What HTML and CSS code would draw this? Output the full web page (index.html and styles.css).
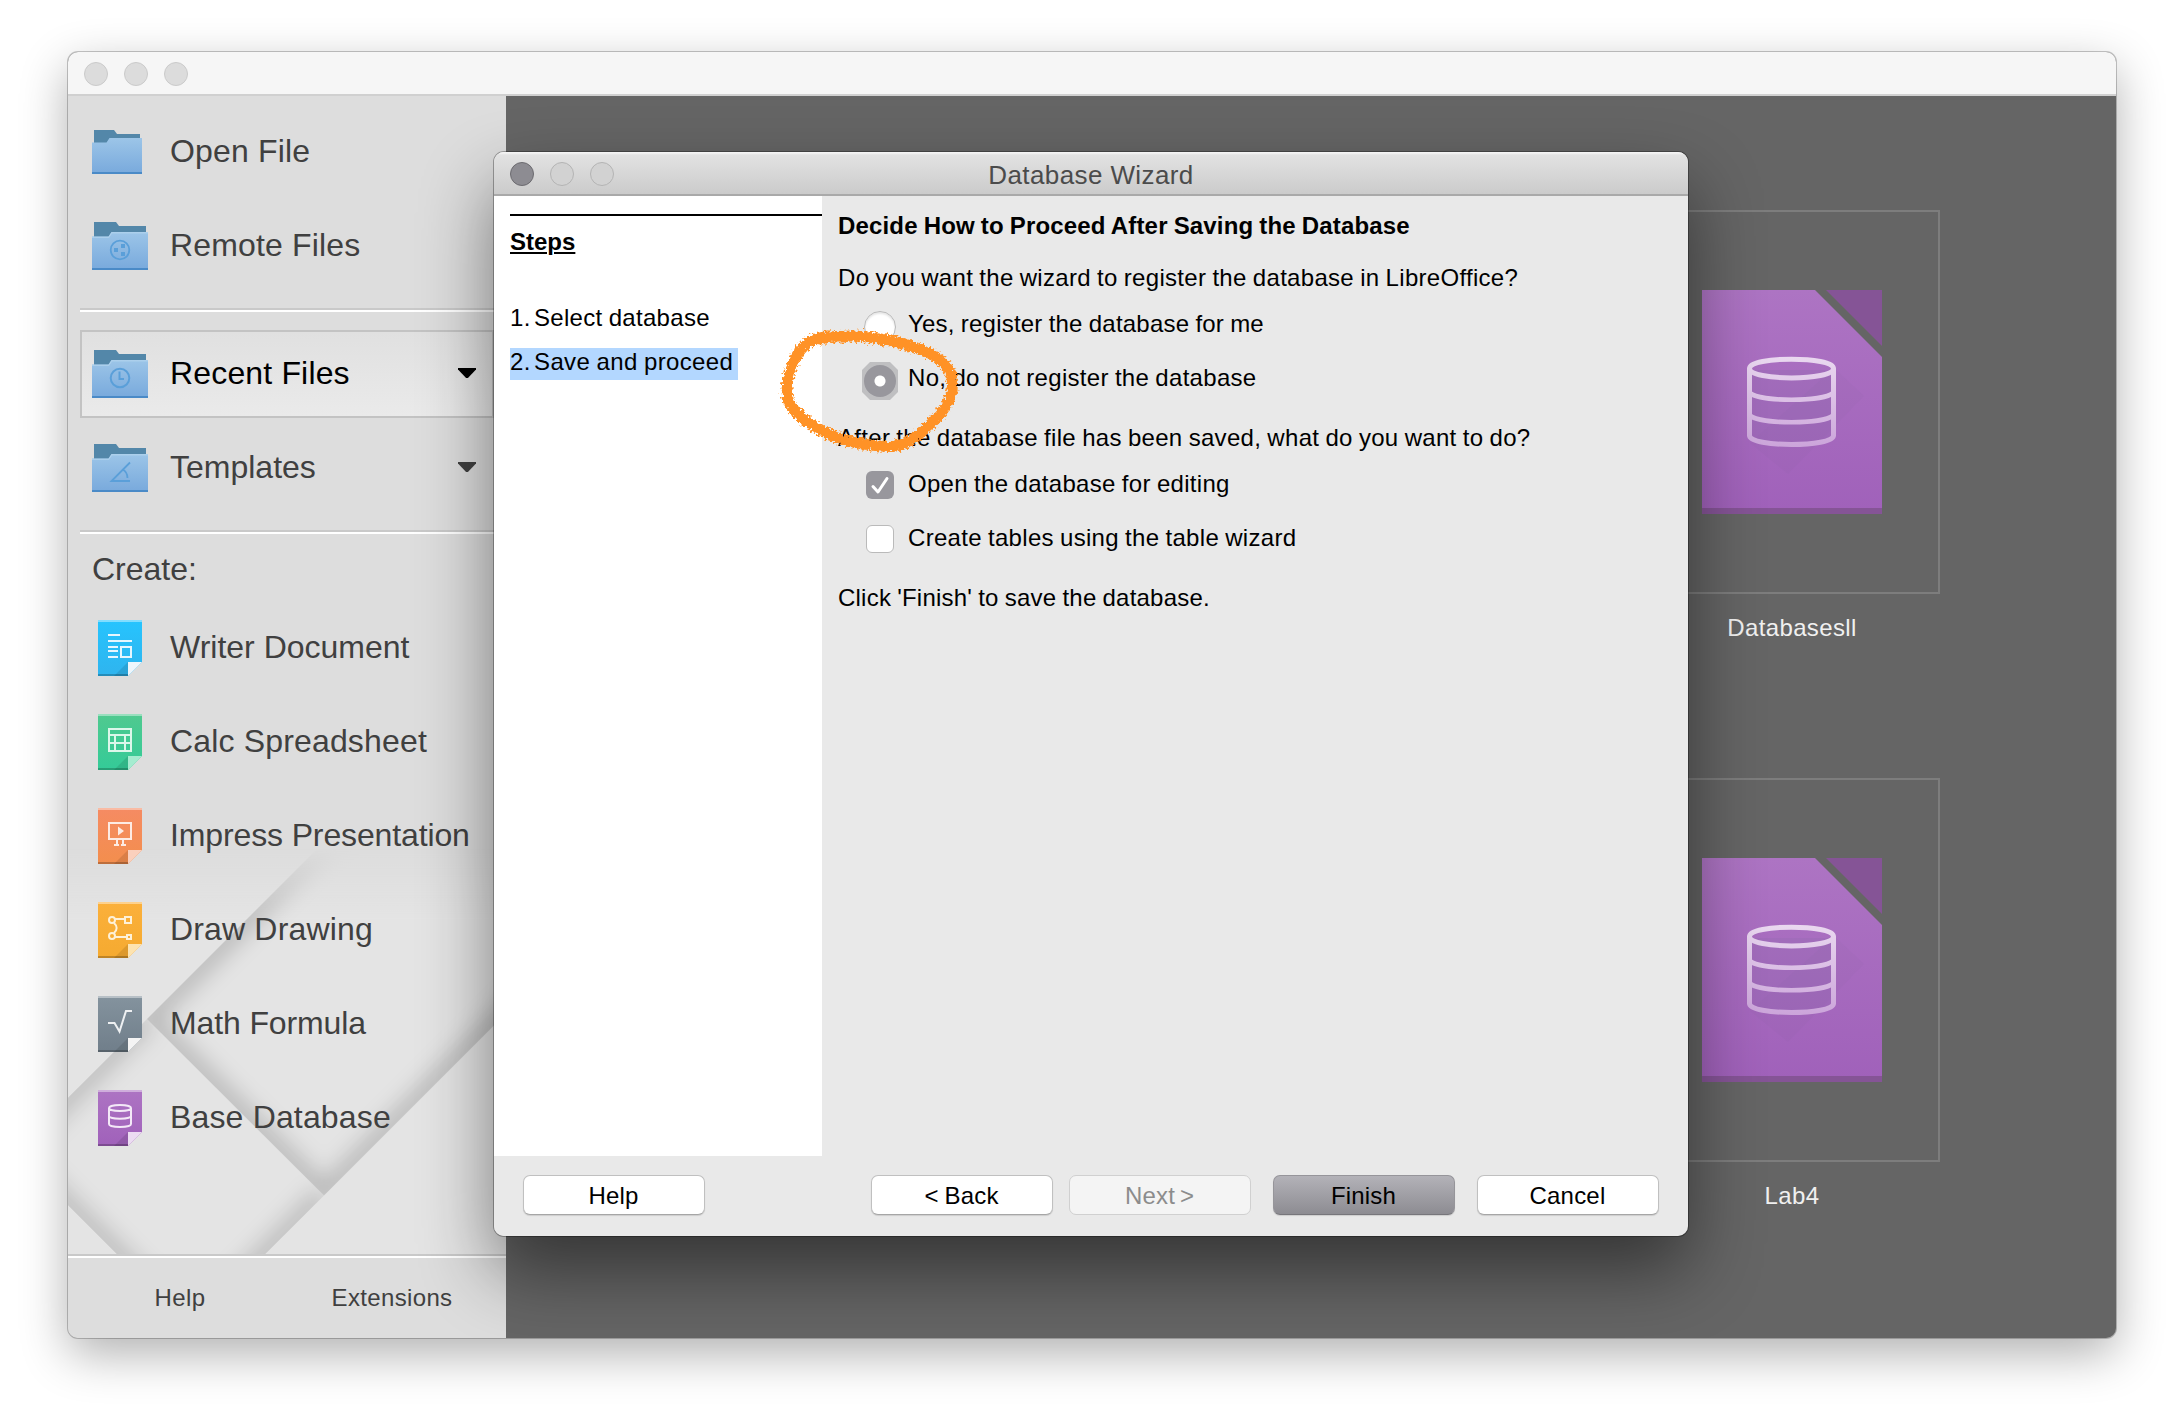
FILE: index.html
```html
<!DOCTYPE html>
<html lang="en">
<head>
<meta charset="utf-8">
<title>Database Wizard</title>
<link rel="stylesheet" href="styles.css">
</head>
<body>
<svg class="defs" width="0" height="0" aria-hidden="true">
  <defs>
    <linearGradient id="folderFront" x1="0" y1="0" x2="0" y2="1"><stop offset="0" stop-color="#9cc5e8"/><stop offset="1" stop-color="#78a9dc"/></linearGradient>
    <linearGradient id="gWriter" x1="0" y1="0" x2="0" y2="1"><stop offset="0" stop-color="#26c4fe"/><stop offset="1" stop-color="#2fb4ee"/></linearGradient>
    <linearGradient id="gCalc" x1="0" y1="0" x2="0" y2="1"><stop offset="0" stop-color="#50c98f"/><stop offset="1" stop-color="#34cb98"/></linearGradient>
    <linearGradient id="gImpress" x1="0" y1="0" x2="0" y2="1"><stop offset="0" stop-color="#f58b63"/><stop offset="1" stop-color="#f38e4d"/></linearGradient>
    <linearGradient id="gDraw" x1="0" y1="0" x2="0" y2="1"><stop offset="0" stop-color="#fbb03b"/><stop offset="1" stop-color="#f5aa30"/></linearGradient>
    <linearGradient id="gMath" x1="0" y1="0" x2="0" y2="1"><stop offset="0" stop-color="#84939e"/><stop offset="1" stop-color="#707e8a"/></linearGradient>
    <linearGradient id="gBase" x1="0" y1="0" x2="0" y2="1"><stop offset="0" stop-color="#ad74c3"/><stop offset="1" stop-color="#a061ba"/></linearGradient>
    <linearGradient id="gCyl" x1="0" y1="66" x2="0" y2="158" gradientUnits="userSpaceOnUse"><stop offset="0" stop-color="#ead9f0"/><stop offset="1" stop-color="#cba4da"/></linearGradient>
    <symbol id="folder" viewBox="0 0 56 56">
      <path d="M2 4h22l3 4h27v14H2z" fill="#5387a9"/>
      <path d="M0 18.500h16.500l3-4.500H56v38H0z" fill="url(#folderFront)"/>
      <path d="M0 18.500h16.500l3-4.500H56v1.500H20l-3 4.500H0z" fill="#b3d4ee" opacity=".7"/>
      <path d="M0 50h56v2H0z" fill="#4a8ac7"/>
    </symbol>
    <symbol id="pageFold" viewBox="0 0 56 56">
      <path d="M36 42v14H22z" fill="#000" opacity=".1"/>
      <path d="M6 54h30v2H6z" fill="#000" opacity=".22"/>
      <path d="M6 0h44v2H6z" fill="#fff" opacity=".42"/>
    </symbol>
    <symbol id="baseFile" viewBox="0 0 180 224">
      <path d="M0 0h113l67 67v157H0z" fill="url(#gBase)"/>
      <path d="M124 0h56v56z" fill="#855496"/>
      <path d="M0 218h180v6H0z" fill="#855496"/>
      <path d="M132 78l30 28-76 78-38-31z" fill="#7b5f9b" opacity=".07"/>
      <path d="M48 80v66c0 14 84 14 84 0V80z" fill="#7d6ba0" opacity=".16"/>
      <g fill="none" stroke="url(#gCyl)" stroke-width="5">
        <path d="M47.500 78.500c0-12.500 84-12.500 84 0s-84 12.500-84 0z"/>
        <path d="M47.500 78.500v67c0 12 84 12 84 0v-67"/>
        <path d="M48 103c10 9 73 9 83 0M48 125.500c10 9 73 9 83 0" stroke-width="4.500"/>
      </g>
    </symbol>
  </defs>
</svg>

<main class="window">
  <header class="titlebar">
    <span class="dot"></span><span class="dot"></span><span class="dot"></span>
  </header>
  <div class="window-body">
    <aside class="sidebar">
      <svg class="pattern" viewBox="68 820 438 436" aria-hidden="true">
        <defs>
          <linearGradient id="fade" x1="0" y1="848" x2="0" y2="920" gradientUnits="userSpaceOnUse"><stop offset="0" stop-color="#000"/><stop offset="1" stop-color="#fff"/></linearGradient>
          <mask id="fadeMask" maskUnits="userSpaceOnUse" x="68" y="820" width="438" height="436"><path d="M68 820h438v434H68z" fill="url(#fade)"/></mask>
          <clipPath id="sqA"><path d="M147 1019 324 1195.500 624 895.500 447 719z"/></clipPath>
          <clipPath id="sqB"><path d="M147 1019 324 1195.500 191 1328 14 1151.500z"/></clipPath>
          <filter id="soft" x="-20%" y="-20%" width="140%" height="140%" color-interpolation-filters="sRGB"><feGaussianBlur stdDeviation="11"/></filter>
        </defs>
        <g mask="url(#fadeMask)">
          <path d="M68 820h438v434H68z" fill="#e4e4e4"/>
          <g clip-path="url(#sqB)"><path d="M324 1195.500 191 1328 14 1151.500 147 1019" fill="none" stroke="#000" stroke-opacity=".18" stroke-width="20" filter="url(#soft)"/></g>
          <g clip-path="url(#sqA)"><path d="M147 1019 324 1195.500 624 895.500 447 719z" fill="none" stroke="#000" stroke-opacity=".2" stroke-width="20" filter="url(#soft)"/></g>
        </g>
      </svg>
      <nav class="group">
        <div class="item"><svg class="icon" viewBox="0 0 56 56"><path d="M2 6h20l3 4h23v12H2z" fill="#5387a9"/><path d="M0 18.500h14.500l3-4.500H50v36H0z" fill="url(#folderFront)"/><path d="M0 48h50v2H0z" fill="#4a8ac7"/></svg><span class="wide">Open File</span></div>
        <div class="item"><svg class="icon"><use href="#folder"/><g fill="none" stroke="#5a9fd9" stroke-width="1.800"><circle cx="28" cy="32" r="9.300"/></g><g fill="#5a9fd9"><path d="M22 30h4v4h-4zM29 26h4v4h-4zM29 34h4v4h-4z"/></g></svg><span class="wide">Remote Files</span></div>
      </nav>
      <hr class="rule">
      <nav class="group">
        <div class="item selected"><svg class="icon"><use href="#folder"/><g fill="none" stroke="#5a9fd9" stroke-width="2"><circle cx="28" cy="32" r="9.300"/><path d="M27.500 25.500V33h4.500"/></g></svg><span class="wide">Recent Files</span><i class="arrow"></i></div>
        <div class="item"><svg class="icon"><use href="#folder"/><g fill="none" stroke="#5a9fd9" stroke-width="1.800"><path d="M38 22.500 19.500 41H38M30.500 29.500c4 2 5 5 5 8.500"/></g></svg><span>Templates</span><i class="arrow"></i></div>
      </nav>
      <hr class="rule">
      <h2 class="create">Create:</h2>
      <nav class="group create-list">
        <div class="item"><svg class="icon"><path d="M6 0h44v42L36 56H6z" fill="url(#gWriter)"/><use href="#pageFold"/><path d="M36 42h14L36 56z" fill="#eef6fc"/><g fill="none" stroke="#e6f6fe" stroke-width="2"><path d="M16 15h12M16 21h24M16 27h10M16 31h10M16 37h10"/><path d="M29 27h10v10H29z"/></g></svg><span>Writer Document</span></div>
        <div class="item"><svg class="icon"><path d="M6 0h44v42L36 56H6z" fill="url(#gCalc)"/><use href="#pageFold"/><path d="M36 42h14L36 56z" fill="#a5ecd0"/><path d="M17 15h22v22H17zM17 21h22M17 29h22M23 21v16M33 21v16" fill="none" stroke="#dcf7ea" stroke-width="2"/></svg><span class="wide">Calc Spreadsheet</span></div>
        <div class="item"><svg class="icon"><path d="M6 0h44v42L36 56H6z" fill="url(#gImpress)"/><use href="#pageFold"/><path d="M36 42h14L36 56z" fill="#fbd0bd"/><path d="M17 15h22v16H17zM25 31v6M31 31v6M22 37h5M29 37h5" fill="none" stroke="#fdebe3" stroke-width="2"/><path d="M26 18.500 32 23l-6 4.500z" fill="#fdebe3"/></svg><span class="tight">Impress Presentation</span></div>
        <div class="item"><svg class="icon"><path d="M6 0h44v42L36 56H6z" fill="url(#gDraw)"/><use href="#pageFold"/><path d="M36 42h14L36 56z" fill="#fde3b0"/><g fill="none" stroke="#fef1d8" stroke-width="2"><circle cx="20" cy="18" r="3"/><circle cx="20" cy="34" r="3"/><path d="M33 15h6v6h-6zM35 33h4v4h-4zM23 17h10M23 35h12M22 21c3.500 3 3.500 7 0 10"/></g></svg><span class="wide">Draw Drawing</span></div>
        <div class="item"><svg class="icon"><path d="M6 0h44v42L36 56H6z" fill="url(#gMath)"/><use href="#pageFold"/><path d="M36 42h14L36 56z" fill="#f4f4f4"/><path d="M16 27h6.500l5 8.500L34 15h6" fill="none" stroke="#eef0f2" stroke-width="2"/></svg><span class="tight">Math Formula</span></div>
        <div class="item"><svg class="icon"><path d="M6 0h44v42L36 56H6z" fill="url(#gBase)"/><use href="#pageFold"/><path d="M36 42h14L36 56z" fill="#ecdcf2"/><g fill="none" stroke="#f3e8f7" stroke-width="2"><path d="M17 18c0-4 22-4 22 0s-22 4-22 0zM17 18v16c0 4 22 4 22 0V18M17 26c0 3.600 22 3.600 22 0"/></g></svg><span class="wide">Base Database</span></div>
      </nav>
      <footer class="side-footer"><span>Help</span><span>Extensions</span></footer>
    </aside>
    <section class="recent">
      <figure class="thumb"><div class="thumb-box"><svg width="180" height="224"><use href="#baseFile"/></svg></div><figcaption>Databasesll</figcaption></figure>
      <figure class="thumb"><div class="thumb-box"><svg width="180" height="224"><use href="#baseFile"/></svg></div><figcaption>Lab4</figcaption></figure>
    </section>
  </div>
</main>

<div class="shadow-clip"><div class="dialog-shadow"></div></div>

<section class="dialog">
  <header class="dialog-title">
    <div class="dots"><span class="dot close"></span><span class="dot"></span><span class="dot"></span></div>
    <h1>Database Wizard</h1>
  </header>
  <div class="dialog-body">
    <div class="steps">
      <h2>Steps</h2>
      <ol>
        <li><b>1.</b><span>Select database</span></li>
        <li class="current"><b>2.</b><span>Save and proceed</span></li>
      </ol>
    </div>
    <div class="page">
      <h3>Decide How to Proceed After Saving the Database</h3>
      <p class="q1">Do you want the wizard to register the database in LibreOffice?</p>
      <div class="option"><i class="radio"></i><span class="snug">Yes, register the database for me</span></div>
      <div class="option"><i class="radio on"></i><span>No, do not register the database</span></div>
      <p class="q2">After the database file has been saved, what do you want to do?</p>
      <div class="option"><i class="check on"><svg width="28" height="28"><path d="M7 15.500 12 21 21 7.500" fill="none" stroke="#fff" stroke-width="3" stroke-linecap="round" stroke-linejoin="round"/></svg></i><span>Open the database for editing</span></div>
      <div class="option"><i class="check"></i><span>Create tables using the table wizard</span></div>
      <p class="q3 snug">Click 'Finish' to save the database.</p>
    </div>
  </div>
  <footer class="buttons">
    <button class="help">Help</button>
    <button class="back">&lt; Back</button>
    <button class="next" disabled>Next &gt;</button>
    <button class="finish">Finish</button>
    <button class="cancel">Cancel</button>
  </footer>
</section>

<svg class="marker" viewBox="770 320 200 140" aria-hidden="true">
  <defs>
    <filter id="crayon" x="-10%" y="-10%" width="120%" height="120%" color-interpolation-filters="sRGB">
      <feTurbulence type="fractalNoise" baseFrequency=".4" numOctaves="3" seed="4"/>
      <feDisplacementMap in="SourceGraphic" scale="8" xChannelSelector="R" yChannelSelector="G"/>
    </filter>
  </defs>
  <path filter="url(#crayon)" d="M847 337C828 336 814 336 804 346 793 358 788 374 787 389 787 408 800 417 812 425 828 435 845 442 863 444 880 446 897 450 911 440 925 430 942 416 950 399 956 381 952 368 936 357 917 346 898 342 880 339 862 335 843 335 820 339" fill="none" stroke="#ff9226" stroke-width="11" stroke-linecap="round"/>
</svg>
</body>
</html>
```

FILE: styles.css
```css
* { box-sizing: border-box; }

body {
  margin: 0;
  width: 2184px;
  height: 1422px;
  overflow: hidden;
  padding: 52px 68px;
  background: #fff;
  color: #404040;
  font-family: "Liberation Sans", Arial, sans-serif;
  font-size: 24px;
  line-height: 29px;
}

h1, h2, h3, p, ol, figure { margin: 0; padding: 0; font-weight: normal; }
.defs { position: absolute; }

/* Main window */
.window {
  width: 2048px;
  height: 1286px;
  border-radius: 10px;
  overflow: hidden;
  background: #656565;
  box-shadow: 0 0 0 1px rgba(0, 0, 0, .22), 0 16px 48px rgba(0, 0, 0, .31);
}
.titlebar {
  display: flex;
  gap: 16px;
  height: 44px;
  padding: 10px 16px;
  background: #f6f6f6;
  border-bottom: 2px solid #d0d0d0;
}
.dot {
  width: 24px;
  height: 24px;
  border-radius: 50%;
  background: #dcdcdc;
  border: 1px solid #cacaca;
}
.window-body { display: flex; height: 1242px; }

/* Sidebar */
.sidebar {
  position: relative;
  display: flex;
  flex-direction: column;
  width: 438px;
  padding-top: 12px;
  background: #ddd;
}
.sidebar > :not(.pattern) { position: relative; }
.pattern {
  position: absolute;
  left: 0;
  top: 724px;
  width: 438px;
  height: 436px;
}
.group {
  display: flex;
  flex-direction: column;
  gap: 6px;
  width: 414px;
  margin-left: 12px;
}
.item {
  display: flex;
  align-items: center;
  height: 88px;
  padding-left: 10px;
  border: 2px solid transparent;
  font-size: 32px;
  line-height: 36px;
}
.item span { margin: 0 auto 2px 22px; white-space: nowrap; }
.item .wide { letter-spacing: .16px; }
.item .tight { letter-spacing: -.13px; }
.item.selected {
  border-color: #c3c3c3;
  background: linear-gradient(#e0e0e0, #eaeaea);
  color: #000;
}
.icon { width: 56px; height: 56px; flex: none; }
.arrow {
  width: 18px;
  height: 10px;
  margin: 0 16px 2px 0;
  background: currentColor;
  clip-path: polygon(0 0, 100% 0, 100% 15%, 55% 100%, 45% 100%, 0 15%);
}
.rule {
  width: 414px;
  height: 4px;
  margin: 18px 0 18px 12px;
  border: 0;
  border-top: 2px solid #c9c9c9;
  background: #fff;
}
.create { margin: -1px 0 0 24px; font-size: 32px; line-height: 36px; }
.create-list { margin-top: 17px; }
.side-footer {
  display: grid;
  grid-template-columns: 224px 200px;
  height: 84px;
  margin: auto 0 0;
  padding-top: 26px;
  background: linear-gradient(#c9c9c9 2px, #fff 2px, #fff 4px, #ddd 4px);
  text-align: center;
  letter-spacing: .35px;
}
.side-footer span { line-height: 36px; }

/* Recent documents */
.recent {
  display: flex;
  flex-direction: column;
  flex: 1;
  align-items: flex-end;
  gap: 138px;
  padding: 114px 176px 0 0;
}
.thumb { width: 296px; text-align: center; color: #f0f0f0; }
.thumb-box {
  display: flex;
  align-items: center;
  justify-content: center;
  height: 384px;
  border: 2px solid #7d7d7d;
}
.thumb figcaption { height: 46px; padding-top: 19px; line-height: 29px; letter-spacing: .36px; }

/* Wizard dialog */
.shadow-clip {
  position: absolute;
  left: 68px;
  top: 96px;
  width: 2048px;
  height: 1242px;
  overflow: hidden;
  border-radius: 0 0 10px 10px;
}
.dialog-shadow {
  position: absolute;
  left: 426px;
  top: 56px;
  width: 1194px;
  height: 1084px;
  border-radius: 10px;
  box-shadow: 0 0 0 1px rgba(0, 0, 0, .3), 0 34px 72px rgba(0, 0, 0, .48);
}
.dialog {
  position: absolute;
  left: 494px;
  top: 152px;
  width: 1194px;
  height: 1084px;
  border-radius: 10px;
  overflow: hidden;
  background: #e9e9e9;
  color: #000;
}
.dialog-title {
  display: grid;
  grid-template-columns: 200px 1fr 200px;
  height: 44px;
  background: linear-gradient(#f4f4f4 1px, #e2e2e2 3px, #cbcbcb);
  border-bottom: 2px solid #a9a9a9;
}
.dots { display: flex; gap: 16px; padding: 10px 16px; }
.dialog .dot { background: #d2d2d2; border-color: #b4b4b4; }
.dialog .dot.close { background: #8d8c92; border-color: #6c6b70; }
.dialog-title h1 {
  padding-top: 8px;
  color: #4b4b4b;
  font-size: 26px;
  line-height: 30px;
  text-align: center;
  letter-spacing: .4px;
}
.dialog-body { display: flex; height: 960px; letter-spacing: .3px; word-spacing: -.8px; }
.steps { width: 328px; padding: 18px 0 0 16px; background: #fff; }
.steps h2 {
  border-top: 2px solid #000;
  padding-top: 11px;
  font-size: 24px;
  font-weight: bold;
  letter-spacing: 0;
  text-decoration: underline;
  text-decoration-thickness: 2px;
  text-underline-offset: 2px;
}
.steps ol { display: flex; flex-direction: column; align-items: flex-start; gap: 12px; margin-top: 48px; list-style: none; }
.steps li { display: flex; height: 32px; padding-right: 5px; line-height: 27px; }
.steps li b { width: 24px; font-weight: normal; }
.steps .current { background: #b3d7ff; letter-spacing: .38px; }
.page { position: relative; z-index: 0; padding: 15px 0 0 16px; white-space: nowrap; }
.page h3 { font-size: 24px; font-weight: bold; letter-spacing: .16px; }
.page .snug { letter-spacing: .22px; }
.q1 { margin: 23px 0 17px; }
.q2 { margin: 6px 0 17px; }
.q3 { margin: 6px 0 0; }
.option { display: flex; align-items: flex-start; height: 54px; padding-left: 26px; }
.option span { margin-left: 12px; }
.radio {
  width: 32px;
  height: 32px;
  margin-top: 2px;
  border-radius: 50%;
  background: #fff;
  border: 1px solid #b9b9b9;
  box-shadow: inset 0 2px 2px rgba(0, 0, 0, .1);
}
.radio.on {
  position: relative;
  border: 0;
  background: radial-gradient(circle, #fff 5px, #98979d 6px);
  box-shadow: none;
}
.radio.on::before {
  content: "";
  position: absolute;
  z-index: -1;
  inset: -3px -2px;
  background: #bfbfc1;
  clip-path: polygon(8px 0, 28px 0, 100% 8px, 100% 30px, 28px 100%, 8px 100%, 0 30px, 0 8px);
}
.check {
  width: 28px;
  height: 28px;
  margin: 2px 2px 0;
  border-radius: 6px;
  background: #fff;
  border: 1px solid #bababa;
}
.check.on { border: 0; background: #98979d; }
.check svg { display: block; }

.buttons { display: flex; padding: 19px 29px 0; }
.buttons button {
  width: 182px;
  height: 40px;
  padding: 1px 1px 0 0;
  border: 1px solid #c0c0c0;
  border-bottom-color: #a6a6a6;
  border-radius: 7px;
  background: #fff;
  box-shadow: 0 1px 1px rgba(0, 0, 0, .12);
  color: #000;
  font: 24px/29px "Liberation Sans", Arial, sans-serif;
  letter-spacing: .2px;
  word-spacing: -1px;
}
.buttons .back { margin-left: auto; }
.buttons .next { margin: 0 22px 0 16px; border-color: #d0d0d0; background: #f4f4f4; box-shadow: none; color: #8c8c8c; word-spacing: -2px; }
.buttons .finish { margin-right: 22px; border-color: #96959a; border-bottom-color: #77767b; background: linear-gradient(#b3b2b8, #8d8c92); }

/* Hand-drawn highlight over the chosen option */
.marker { position: absolute; left: 770px; top: 320px; width: 200px; height: 140px; }
```
